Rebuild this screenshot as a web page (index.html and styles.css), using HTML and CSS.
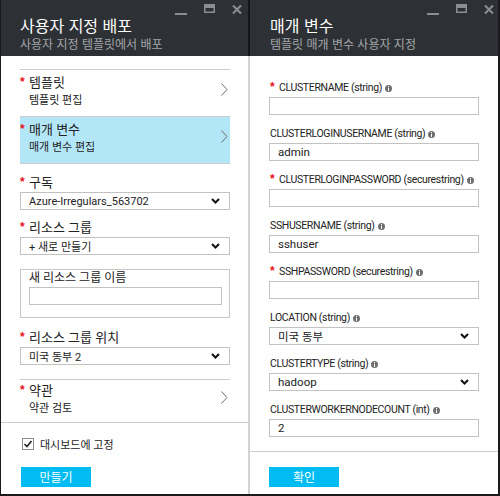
FILE: index.html
```html
<!DOCTYPE html>
<html lang="ko">
<head>
<meta charset="UTF-8" />
<meta name="viewport" content="width=device-width, initial-scale=1.0" />
<title>사용자 지정 배포</title>
<link rel="stylesheet" href="styles.css">
</head>
<body>
<div class="app">

  <!-- 왼쪽 블레이드 -->
  <section class="blade blade-left">
    <header class="blade-head">
      <div class="head-text">
        <h1>사용자 지정 배포</h1>
        <p>사용자 지정 템플릿에서 배포</p>
      </div>
      <div class="win-ctrls">
        <svg width="12" height="12" viewBox="0 0 12 12"><rect x="0" y="9" width="12" height="2" fill="#8b8e91"/></svg>
        <svg width="11" height="12" viewBox="0 0 11 12"><path d="M0 0H11V9H0Z M1.5 4H9.5V7.5H1.5Z" fill="#8b8e91" fill-rule="evenodd"/></svg>
        <svg width="10" height="12" viewBox="0 0 10 12"><path d="M1 1.5L9 9.5M9 1.5L1 9.5" stroke="#8b8e91" stroke-width="2"/></svg>
      </div>
    </header>

    <div class="blade-body">
      <ul class="nav-list">
        <li class="nav-item">
          <div>
            <div class="nav-title"><span class="req">*</span>템플릿</div>
            <div class="nav-sub">템플릿 편집</div>
          </div>
          <svg class="chev" width="7" height="13" viewBox="0 0 7 13"><path d="M0.5 0.5L6 6.5L0.5 12.5" fill="none" stroke="#6d6d6d"/></svg>
        </li>
        <li class="nav-item active">
          <div>
            <div class="nav-title"><span class="req">*</span>매개 변수</div>
            <div class="nav-sub">매개 변수 편집</div>
          </div>
          <svg class="chev" width="7" height="13" viewBox="0 0 7 13"><path d="M0.5 0.5L6 6.5L0.5 12.5" fill="none" stroke="#6d6d6d"/></svg>
        </li>
      </ul>

      <div class="field field-first">
        <div class="field-label"><span class="req">*</span>구독</div>
        <div class="select">Azure-Irregulars_563702
          <svg width="9" height="6" viewBox="0 0 9 6"><path d="M1 1L4.5 4.5L8 1" fill="none" stroke="#111" stroke-width="2"/></svg>
        </div>
      </div>

      <div class="field">
        <div class="field-label"><span class="req">*</span>리소스 그룹</div>
        <div class="select">+ 새로 만들기
          <svg width="9" height="6" viewBox="0 0 9 6"><path d="M1 1L4.5 4.5L8 1" fill="none" stroke="#111" stroke-width="2"/></svg>
        </div>
      </div>

      <div class="group-box">
        <div class="group-label">새 리소스 그룹 이름</div>
        <div class="text-input"></div>
      </div>

      <div class="field field-loc">
        <div class="field-label"><span class="req">*</span>리소스 그룹 위치</div>
        <div class="select">미국 동부 2
          <svg width="9" height="6" viewBox="0 0 9 6"><path d="M1 1L4.5 4.5L8 1" fill="none" stroke="#111" stroke-width="2"/></svg>
        </div>
      </div>

      <ul class="nav-list terms">
        <li class="nav-item">
          <div>
            <div class="nav-title"><span class="req">*</span>약관</div>
            <div class="nav-sub">약관 검토</div>
          </div>
          <svg class="chev" width="7" height="13" viewBox="0 0 7 13"><path d="M0.5 0.5L6 6.5L0.5 12.5" fill="none" stroke="#6d6d6d"/></svg>
        </li>
      </ul>
    </div>

    <footer class="blade-foot">
      <label class="check">
        <span class="box"><svg width="10" height="10" viewBox="0 0 10 10"><path d="M1.5 5L4 7.5L8.5 2" fill="none" stroke="#222" stroke-width="1.6"/></svg></span>
        대시보드에 고정
      </label>
      <button class="btn">만들기</button>
    </footer>
  </section>

  <!-- 오른쪽 블레이드 -->
  <section class="blade blade-right">
    <header class="blade-head">
      <div class="head-text">
        <h1>매개 변수</h1>
        <p>템플릿 매개 변수 사용자 지정</p>
      </div>
      <div class="win-ctrls">
        <svg width="12" height="12" viewBox="0 0 12 12"><rect x="0" y="9" width="12" height="2" fill="#8b8e91"/></svg>
        <svg width="11" height="12" viewBox="0 0 11 12"><path d="M0 0H11V9H0Z M1.5 4H9.5V7.5H1.5Z" fill="#8b8e91" fill-rule="evenodd"/></svg>
        <svg width="10" height="12" viewBox="0 0 10 12"><path d="M1 1.5L9 9.5M9 1.5L1 9.5" stroke="#8b8e91" stroke-width="2"/></svg>
      </div>
    </header>

    <div class="blade-body params">
      <div class="param">
        <div class="param-label"><span class="req">*</span>CLUSTERNAME (string)<svg class="info" width="7" height="7" viewBox="0 0 7 7"><circle cx="3.5" cy="3.5" r="3.5" fill="#6f6f6f"/><rect x="3" y="1" width="1" height="1" fill="#fff"/><rect x="3" y="2.7" width="1" height="3.2" fill="#fff"/></svg></div>
        <div class="text-input"></div>
      </div>
      <div class="param">
        <div class="param-label">CLUSTERLOGINUSERNAME (string)<svg class="info" width="7" height="7" viewBox="0 0 7 7"><circle cx="3.5" cy="3.5" r="3.5" fill="#6f6f6f"/><rect x="3" y="1" width="1" height="1" fill="#fff"/><rect x="3" y="2.7" width="1" height="3.2" fill="#fff"/></svg></div>
        <div class="text-input">admin</div>
      </div>
      <div class="param">
        <div class="param-label"><span class="req">*</span>CLUSTERLOGINPASSWORD (securestring)<svg class="info" width="7" height="7" viewBox="0 0 7 7"><circle cx="3.5" cy="3.5" r="3.5" fill="#6f6f6f"/><rect x="3" y="1" width="1" height="1" fill="#fff"/><rect x="3" y="2.7" width="1" height="3.2" fill="#fff"/></svg></div>
        <div class="text-input"></div>
      </div>
      <div class="param">
        <div class="param-label">SSHUSERNAME (string)<svg class="info" width="7" height="7" viewBox="0 0 7 7"><circle cx="3.5" cy="3.5" r="3.5" fill="#6f6f6f"/><rect x="3" y="1" width="1" height="1" fill="#fff"/><rect x="3" y="2.7" width="1" height="3.2" fill="#fff"/></svg></div>
        <div class="text-input">sshuser</div>
      </div>
      <div class="param">
        <div class="param-label"><span class="req">*</span>SSHPASSWORD (securestring)<svg class="info" width="7" height="7" viewBox="0 0 7 7"><circle cx="3.5" cy="3.5" r="3.5" fill="#6f6f6f"/><rect x="3" y="1" width="1" height="1" fill="#fff"/><rect x="3" y="2.7" width="1" height="3.2" fill="#fff"/></svg></div>
        <div class="text-input"></div>
      </div>
      <div class="param">
        <div class="param-label">LOCATION (string)<svg class="info" width="7" height="7" viewBox="0 0 7 7"><circle cx="3.5" cy="3.5" r="3.5" fill="#6f6f6f"/><rect x="3" y="1" width="1" height="1" fill="#fff"/><rect x="3" y="2.7" width="1" height="3.2" fill="#fff"/></svg></div>
        <div class="select">미국 동부
          <svg width="9" height="6" viewBox="0 0 9 6"><path d="M1 1L4.5 4.5L8 1" fill="none" stroke="#111" stroke-width="2"/></svg>
        </div>
      </div>
      <div class="param">
        <div class="param-label">CLUSTERTYPE (string)<svg class="info" width="7" height="7" viewBox="0 0 7 7"><circle cx="3.5" cy="3.5" r="3.5" fill="#6f6f6f"/><rect x="3" y="1" width="1" height="1" fill="#fff"/><rect x="3" y="2.7" width="1" height="3.2" fill="#fff"/></svg></div>
        <div class="select">hadoop
          <svg width="9" height="6" viewBox="0 0 9 6"><path d="M1 1L4.5 4.5L8 1" fill="none" stroke="#111" stroke-width="2"/></svg>
        </div>
      </div>
      <div class="param">
        <div class="param-label">CLUSTERWORKERNODECOUNT (int)<svg class="info" width="7" height="7" viewBox="0 0 7 7"><circle cx="3.5" cy="3.5" r="3.5" fill="#6f6f6f"/><rect x="3" y="1" width="1" height="1" fill="#fff"/><rect x="3" y="2.7" width="1" height="3.2" fill="#fff"/></svg></div>
        <div class="text-input">2</div>
      </div>
    </div>

    <footer class="blade-foot">
      <button class="btn">확인</button>
    </footer>
  </section>

</div>
</body>
</html>
```

FILE: styles.css
```css
* { box-sizing: border-box; }
body { margin: 0; background: #fff; font-family: Roboto, "Noto Sans CJK KR", sans-serif; color: #222; }
ul { list-style: none; margin: 0; padding: 0; }

.app { width: 500px; height: 496px; display: flex; border-left: 1px solid #1a1a1a; border-right: 2px solid #1a1a1a; border-bottom: 2px solid #1a1a1a; }
.blade { display: flex; flex-direction: column; }
.blade-left { width: 249px; }
.blade-right { flex: 1; }

/* 헤더 */
.blade-head { height: 56px; background: #2d3135; display: flex; align-items: flex-start; padding: 4px 6px 0 19px; }
.blade-left .blade-head { border-right: 2px solid #141618; }
.blade-right .blade-head { padding-left: 20px; padding-right: 4px; }
.head-text { flex: 1; margin-top: 10px; }
.head-text h1 { margin: 0; font-size: 16px; line-height: 22px; font-weight: normal; color: #fff; font-family: "Noto Sans CJK KR", sans-serif; }
.head-text p { margin: 0; font-size: 12px; line-height: 16px; color: #a3a5a8; font-family: "Noto Sans CJK KR", sans-serif; }
.win-ctrls { display: flex; gap: 17px; }
.win-ctrls svg { display: block; }

/* 본문 */
.blade-body { flex: 1; padding: 13px 18px 0 19px; }
.blade-left .blade-body { border-right: 2px solid #d2d2d2; }
.nav-list { border-top: 1px solid #cdcdcd; }
.nav-item { display: flex; align-items: center; justify-content: space-between; padding: 4px 2px 6px 9px; border-bottom: 1px solid #cdcdcd; }
.nav-item.active { background: #b3e6f7; }
.nav-title { font-size: 13px; line-height: 18px; }
.nav-sub { font-size: 11px; line-height: 18px; }
.chev { display: block; margin-top: -6px; }
.req { display: inline-block; width: 9px; margin-left: -9px; color: #e81123; font-weight: bold; font-size: 12px; line-height: 10px; vertical-align: top; padding-top: 3px; font-family: "Liberation Sans", sans-serif; }

.terms { margin-top: 14px; }
.terms .nav-item { border-bottom: none; padding-top: 2px; padding-bottom: 1px; }

.field { margin-top: 9px; }
.field-first { margin-top: 10px; }
.field-loc { margin-top: 11px; }
.field-label { font-size: 13px; line-height: 18px; padding-left: 9px; }

.select { height: 18px; border: 1px solid #c2c2c2; padding: 0 9px 0 8px; display: flex; align-items: center; justify-content: space-between; font-size: 11px; }
.select svg { display: block; }
.text-input { height: 18px; border: 1px solid #c2c2c2; padding-left: 8px; font-size: 11px; line-height: 16px; }

.group-box { margin-top: 14px; border: 1px solid #c8c8c8; padding: 0 7px 12px 8px; }
.group-label { font-size: 12px; line-height: 17px; }

/* 매개 변수 */
.params { padding: 24px 19px 0 19px; }
.param { margin-bottom: 11px; }
.param-label { font-size: 10.5px; letter-spacing: -0.35px; line-height: 16px; padding-left: 1px; display: flex; align-items: center; margin-bottom: 1px; }
.param-label .req { margin-left: 0; align-self: flex-start; padding-top: 2px; letter-spacing: 0; }
.info { display: block; margin-left: 3px; }
.params .text-input, .params .select { font-size: 11.5px; }

/* 푸터 */
.blade-foot { border-top: 1px solid #cdcdcd; padding: 15px 0 7px 19px; }
.blade-left .blade-foot { padding-top: 13px; padding-left: 20px; border-right: 2px solid #d2d2d2; }
.check { display: flex; align-items: center; height: 16px; font-size: 11px; margin-bottom: 15px; }
.box { width: 12px; height: 12px; border: 1px solid #8a8a8a; margin: 0 6px 0 1px; display: flex; align-items: center; justify-content: center; }
.box svg { display: block; }
.btn { display: block; width: 70px; height: 20px; border: none; background: #00bcf2; color: #fff; font-size: 12px; font-family: "Noto Sans CJK KR", sans-serif; padding: 0; line-height: 20px; }
```
